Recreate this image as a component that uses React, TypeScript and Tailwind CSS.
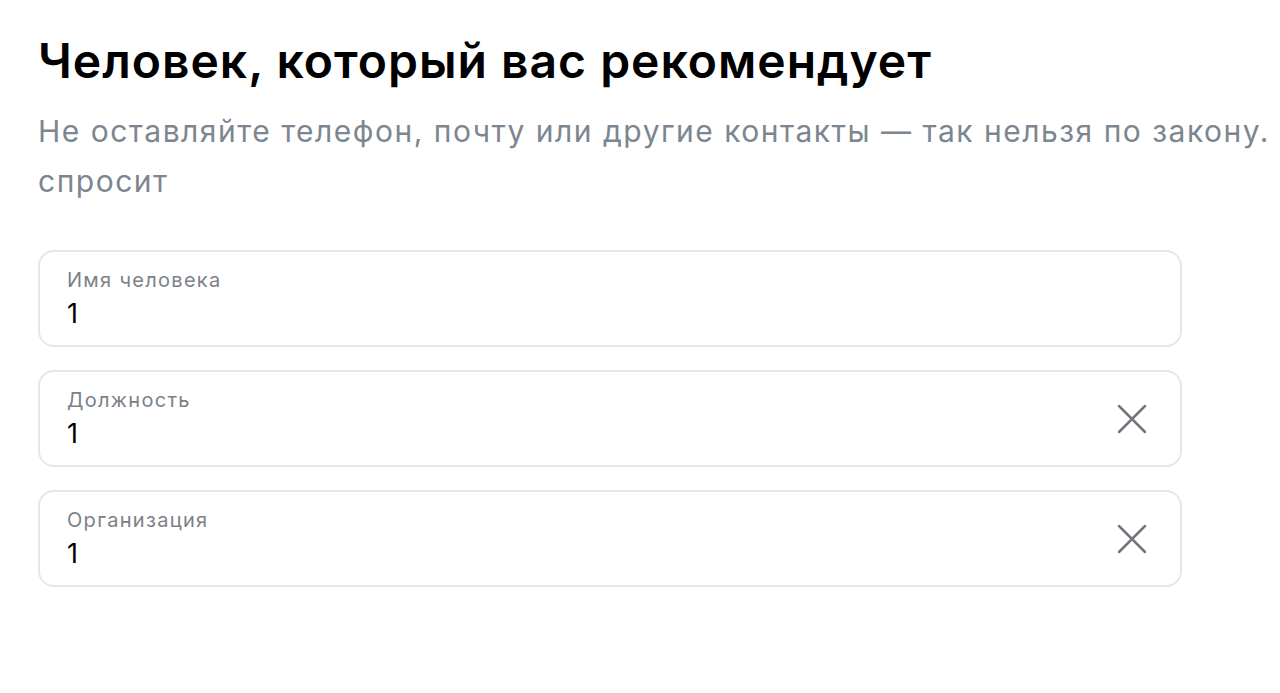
type Field = {
  label: string;
  value: string;
  clearable?: boolean;
};

const fields: Field[] = [
  { label: "Имя человека", value: "1" },
  { label: "Должность", value: "1", clearable: true },
  { label: "Организация", value: "1", clearable: true },
];

function ClearIcon() {
  return (
    <svg width="30" height="30" viewBox="0 0 30 30" fill="none" className="text-[#72777d]">
      <path d="M2 2L28 28M28 2L2 28" stroke="currentColor" strokeWidth="2.5" strokeLinecap="round" />
    </svg>
  );
}

function FormField({ label, value, clearable }: Field) {
  return (
    <div className="flex h-[97px] items-center rounded-[16px] border-2 border-[#e6e7e9] bg-white pl-[27px] pr-[33px]">
      <div className="flex flex-1 flex-col">
        <span className="text-[20px] leading-[24px] tracking-[1.3px] text-[#7c8187]">{label}</span>
        <span className="mt-[6px] text-[27px] leading-[32px] text-black">{value}</span>
      </div>
      {clearable && <ClearIcon />}
    </div>
  );
}

export default function App() {
  return (
    <div className="min-h-[693px] w-[1280px] overflow-hidden bg-white pl-[38px] pt-[31px] font-['Inter','Liberation_Sans',sans-serif]">
      <h1 className="whitespace-nowrap text-[48px] font-semibold leading-[60px] tracking-[1px] text-black">
        Человек, который вас рекомендует
      </h1>
      <p className="mt-[15px] whitespace-nowrap text-[30px] leading-[50px] tracking-[1.5px] text-[#7c8690]">
        Не оставляйте телефон, почту или другие контакты — так нельзя по закону.
        <br />
        спросит
      </p>
      <div className="mt-[44px] flex w-[1144px] flex-col gap-[23px]">
        {fields.map((f) => (
          <FormField key={f.label} {...f} />
        ))}
      </div>
    </div>
  );
}
